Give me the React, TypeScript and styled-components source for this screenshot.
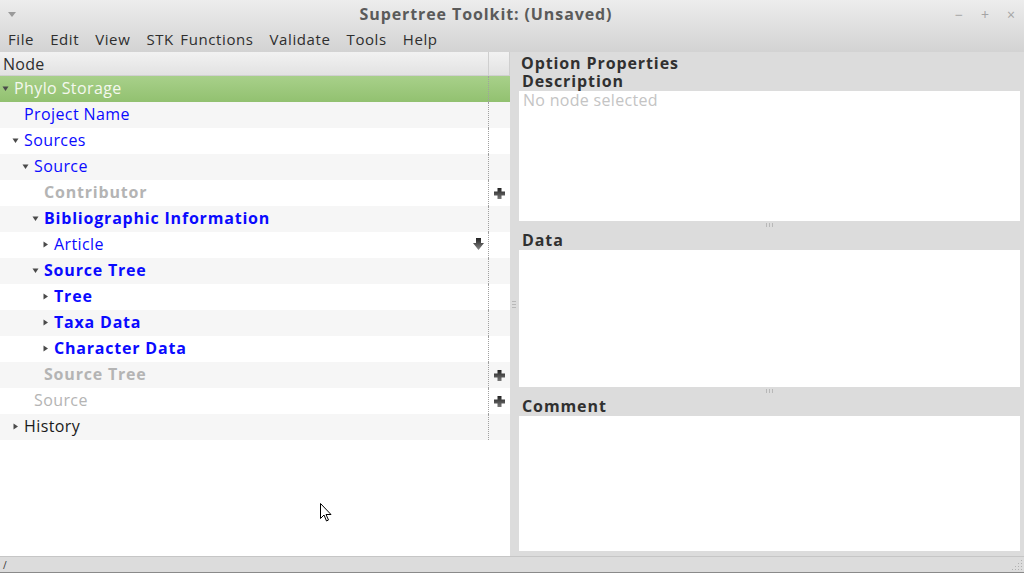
import React from "react";
import styled, { createGlobalStyle } from "styled-components";

const Global = createGlobalStyle`
  html, body { margin: 0; padding: 0; background: #dcdcdc; }
  body { font-family: "Open Sans", "Noto Sans", sans-serif; }
  * { box-sizing: border-box; }
`;

const Window = styled.div`
  width: 1024px;
  height: 573px;
  display: flex;
  flex-direction: column;
  position: relative;
  overflow: hidden;
  background: #dcdcdc;
`;

const Top = styled.div`
  background: linear-gradient(#ededed, #d3d3d3);
  display: flex;
  flex-direction: column;
`;

const TitleBar = styled.div`
  height: 28px;
  display: flex;
  align-items: center;
  padding: 0 0 0 8px;
  color: #5a5a5a;
`;

const TitleText = styled.div`
  flex: 1;
  text-align: center;
  font-weight: 700;
  font-size: 16px;
  letter-spacing: 0.9px;
  margin-top: -1px;
  padding-left: 10px;
`;

const WinButtons = styled.div`
  display: flex;
  align-items: center;
  color: #a4a4a4;
  font-size: 14px;
`;

const WinButton = styled.span`
  width: 26px;
  text-align: center;
`;

const MenuBar = styled.div`
  height: 24px;
  display: flex;
  align-items: center;
  padding: 0 0 2px 8px;
  gap: 16px;
  font-size: 15px;
  letter-spacing: 0.6px;
  word-spacing: 2px;
  color: #2e2e2e;
`;

const MenuItem = styled.span``;

const Main = styled.div`
  flex: 1;
  display: flex;
  min-height: 0;
`;

const TreePane = styled.div`
  width: 510px;
  background: #fff;
  display: flex;
  flex-direction: column;
`;

const TreeHeader = styled.div`
  height: 24px;
  display: flex;
  background: linear-gradient(#f2f2f2, #e2e2e2);
  border-bottom: 1px solid #d0d0d0;
  font-size: 16px;
  letter-spacing: 0.3px;
  color: #2e2e2e;
`;

const HeaderCell = styled.div<{ $w?: number }>`
  ${(p) => (p.$w ? `width: ${p.$w}px;` : "flex: 1;")}
  display: flex;
  align-items: center;
  padding-left: 3px;
  border-right: 1px solid #cfcfcf;
`;

const Row = styled.div<{ $alt?: boolean; $selected?: boolean }>`
  height: 26px;
  display: flex;
  background: ${(p) =>
    p.$selected
      ? "linear-gradient(#a8d08a, #92c170)"
      : p.$alt
      ? "#f6f6f6"
      : "#ffffff"};
`;

const MainCell = styled.div<{ $indent: number }>`
  width: 488px;
  display: flex;
  align-items: center;
  padding-left: ${(p) => p.$indent}px;
  padding-bottom: 2px;
  position: relative;
`;

const SideCell = styled.div`
  flex: 1;
  display: flex;
  align-items: center;
  justify-content: center;
  border-left: 1px dotted #a0a0a0;
`;

const Arrow = styled.span`
  width: 12px;
  display: inline-flex;
  align-items: center;
  justify-content: flex-start;
`;

type Kind = "blue" | "blueBold" | "grey" | "greyBold" | "black" | "selected";

const Label = styled.span<{ $kind: Kind }>`
  font-size: 16px;
  white-space: nowrap;
  letter-spacing: ${(p) => (p.$kind === "blueBold" || p.$kind === "greyBold" ? "0.8px" : "0.4px")};
  font-weight: ${(p) => (p.$kind === "blueBold" || p.$kind === "greyBold" ? 700 : 400)};
  color: ${(p) =>
    p.$kind === "blue" || p.$kind === "blueBold"
      ? "#0a0aff"
      : p.$kind === "grey" || p.$kind === "greyBold"
      ? "#b4b4b4"
      : p.$kind === "selected"
      ? "#f4f8ee"
      : "#1a1a1a"};
`;

const RowIcon = styled.span`
  position: absolute;
  right: 4px;
  top: 6px;
  display: flex;
`;

const Splitter = styled.div`
  width: 8px;
  background: #dcdcdc;
  display: flex;
  align-items: center;
  justify-content: center;
`;

const GripV = styled.div`
  display: flex;
  flex-direction: column;
  gap: 2px;
  & > i {
    display: block;
    width: 4px;
    height: 1px;
    background: #b8b8b8;
  }
`;

const PropPane = styled.div`
  flex: 1;
  display: flex;
  flex-direction: column;
  padding: 0 4px 5px 1px;
`;

const PaneTitle = styled.div`
  height: 20px;
  padding: 2px 0 0 2px;
  font-size: 16px;
  letter-spacing: 0.9px;
  font-weight: 700;
  color: #303030;
  line-height: 18px;
`;

const SectionLabel = styled.div`
  height: 19px;
  padding: 0 0 0 3px;
  font-size: 16px;
  letter-spacing: 0.9px;
  font-weight: 700;
  color: #303030;
  line-height: 19px;
`;

const Box = styled.div<{ $h: number }>`
  height: ${(p) => p.$h}px;
  background: #fff;
  padding: 0 4px;
  font-size: 16px;
  letter-spacing: 0.3px;
  color: #c4c4c4;
  line-height: 18px;
`;

const HGrip = styled.div`
  height: 10px;
  display: flex;
  justify-content: center;
  align-items: flex-start;
  padding-top: 2px;
  gap: 2px;
  & > i {
    display: block;
    width: 1px;
    height: 4px;
    background: #b8b8b8;
  }
`;

const StatusBar = styled.div`
  height: 17px;
  border-top: 1px solid #c6c6c6;
  border-bottom: 1px solid #8a8a8a;
  background: #dcdcdc;
  display: flex;
  align-items: center;
  padding-left: 3px;
  font-size: 10px;
  color: #333;
  position: relative;
`;

const ResizeGrip = styled.svg`
  position: absolute;
  right: 1px;
  bottom: 1px;
`;

const Cursor = styled.svg`
  position: absolute;
  left: 320px;
  top: 503px;
`;

const Tri = ({ open }: { open: boolean }) => (
  <svg width="7" height="7" viewBox="0 0 7 7">
    {open ? (
      <polygon points="0.5,1.5 6.5,1.5 3.5,6" fill="#4a4a4a" />
    ) : (
      <polygon points="1.5,0.5 6,3.5 1.5,6.5" fill="#4a4a4a" />
    )}
  </svg>
);

const Plus = () => (
  <svg width="11" height="11" viewBox="0 0 11 11">
    <defs>
      <linearGradient id="pg" x1="0" y1="0" x2="0" y2="1">
        <stop offset="0" stopColor="#222" />
        <stop offset="1" stopColor="#777" />
      </linearGradient>
    </defs>
    <path d="M3.5 0h4v3.5h3.5v4h-3.5v3.5h-4v-3.5h-3.5v-4h3.5z" fill="url(#pg)" />
  </svg>
);

const Down = () => (
  <svg width="11" height="12" viewBox="0 0 11 12">
    <defs>
      <linearGradient id="dg" x1="0" y1="0" x2="0" y2="1">
        <stop offset="0" stopColor="#222" />
        <stop offset="1" stopColor="#888" />
      </linearGradient>
    </defs>
    <path d="M3 0h5v5h3l-5.5 7l-5.5-7h3z" fill="url(#dg)" />
  </svg>
);

type Node = {
  label: string;
  level: number;
  arrow?: "open" | "closed";
  kind: Kind;
  side?: "plus";
  down?: boolean;
  selected?: boolean;
};

const nodes: Node[] = [
  { label: "Phylo Storage", level: 0, arrow: "open", kind: "selected", selected: true },
  { label: "Project Name", level: 1, kind: "blue" },
  { label: "Sources", level: 1, arrow: "open", kind: "blue" },
  { label: "Source", level: 2, arrow: "open", kind: "blue" },
  { label: "Contributor", level: 3, kind: "greyBold", side: "plus" },
  { label: "Bibliographic Information", level: 3, arrow: "open", kind: "blueBold" },
  { label: "Article", level: 4, arrow: "closed", kind: "blue", down: true },
  { label: "Source Tree", level: 3, arrow: "open", kind: "blueBold" },
  { label: "Tree", level: 4, arrow: "closed", kind: "blueBold" },
  { label: "Taxa Data", level: 4, arrow: "closed", kind: "blueBold" },
  { label: "Character Data", level: 4, arrow: "closed", kind: "blueBold" },
  { label: "Source Tree", level: 3, kind: "greyBold", side: "plus" },
  { label: "Source", level: 2, kind: "grey", side: "plus" },
  { label: "History", level: 1, arrow: "closed", kind: "black" },
];

const TreeFill = styled.div`
  flex: 1;
  background: #fff;
`;

export default function App() {
  return (
    <Window>
      <Global />
      <Top>
        <TitleBar>
          <svg width="8" height="5" viewBox="0 0 8 5">
            <polygon points="0,0 8,0 4,5" fill="#9a9a9a" />
          </svg>
          <TitleText>Supertree Toolkit: (Unsaved)</TitleText>
          <WinButtons>
            <WinButton>−</WinButton>
            <WinButton>+</WinButton>
            <WinButton>×</WinButton>
          </WinButtons>
        </TitleBar>
        <MenuBar>
          {["File", "Edit", "View", "STK Functions", "Validate", "Tools", "Help"].map((m) => (
            <MenuItem key={m}>{m}</MenuItem>
          ))}
        </MenuBar>
      </Top>
      <Main>
        <TreePane>
          <TreeHeader>
            <HeaderCell $w={489}>Node</HeaderCell>
            <HeaderCell />
          </TreeHeader>
          {nodes.map((n, i) => (
            <Row key={i} $alt={i % 2 === 1} $selected={n.selected}>
              <MainCell $indent={2 + n.level * 10}>
                <Arrow>{n.arrow ? <Tri open={n.arrow === "open"} /> : null}</Arrow>
                <Label $kind={n.kind}>{n.label}</Label>
                {n.down ? (
                  <RowIcon>
                    <Down />
                  </RowIcon>
                ) : null}
              </MainCell>
              <SideCell>{n.side ? <Plus /> : null}</SideCell>
            </Row>
          ))}
          <TreeFill />
        </TreePane>
        <Splitter>
          <GripV>
            <i />
            <i />
            <i />
          </GripV>
        </Splitter>
        <PropPane>
          <PaneTitle>Option Properties</PaneTitle>
          <SectionLabel>Description</SectionLabel>
          <Box $h={131}>No node selected</Box>
          <HGrip>
            <i />
            <i />
            <i />
          </HGrip>
          <SectionLabel>Data</SectionLabel>
          <Box $h={138} />
          <HGrip>
            <i />
            <i />
            <i />
          </HGrip>
          <SectionLabel>Comment</SectionLabel>
          <Box $h={136} />
        </PropPane>
      </Main>
      <StatusBar>
        /
        <ResizeGrip width="12" height="12" viewBox="0 0 12 12">
          {[
            [10, 2],
            [7, 5],
            [10, 5],
            [4, 8],
            [7, 8],
            [10, 8],
            [1, 11],
            [4, 11],
            [7, 11],
            [10, 11],
          ].map(([x, y], k) => (
            <rect key={k} x={x} y={y - 1} width="1" height="1" fill="#b0b0b0" />
          ))}
        </ResizeGrip>
      </StatusBar>
      <Cursor width="12" height="20" viewBox="0 0 12 20">
        <path d="M0.5 0.5v15l3.5-3.5 2.5 6 2-1-2.5-5.5h5z" fill="#fff" stroke="#000" strokeWidth="1" />
      </Cursor>
    </Window>
  );
}
